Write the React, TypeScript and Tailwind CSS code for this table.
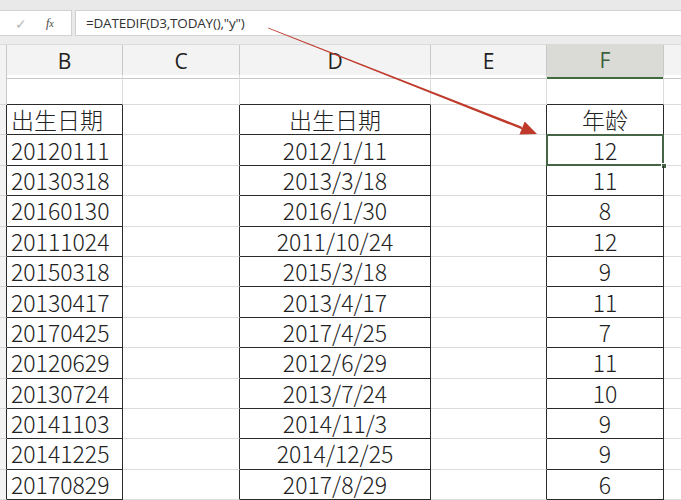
// Excel 截图：DATEDIF 计算年龄
const COLS = ["B", "C", "D", "E", "F"];

const rows: [string, string, string][] = [
  ["20120111", "2012/1/11", "12"],
  ["20130318", "2013/3/18", "11"],
  ["20160130", "2016/1/30", "8"],
  ["20111024", "2011/10/24", "12"],
  ["20150318", "2015/3/18", "9"],
  ["20130417", "2013/4/17", "11"],
  ["20170425", "2017/4/25", "7"],
  ["20120629", "2012/6/29", "11"],
  ["20130724", "2013/7/24", "10"],
  ["20141103", "2014/11/3", "9"],
  ["20141225", "2014/12/25", "9"],
  ["20170829", "2017/8/29", "6"],
];

const grid = "grid grid-cols-[7px_116px_117px_191px_116px_117px_1fr]";
const cellFont = "font-['Noto_Sans_CJK_SC','Noto_Sans',sans-serif] font-light text-[23px] text-[#222]";

function EmptyRow() {
  // 第 2 行：空行，下边框是表格上沿
  return (
    <div className={`${grid} h-[30px]`}>
      <div className="border-r border-b border-r-[#c8c8c8] border-b-[#d6d6d6] bg-[#f3f3f3]" />
      <div className="border-r border-b border-r-[#dcdcdc] border-b-[#2a2a2a]" />
      <div className="border-r border-b border-r-[#dcdcdc] border-b-[#dcdcdc]" />
      <div className="border-r border-b border-r-[#dcdcdc] border-b-[#2a2a2a]" />
      <div className="border-r border-b border-r-[#dcdcdc] border-b-[#dcdcdc]" />
      <div className="border-r border-b border-r-[#dcdcdc] border-b-[#2a2a2a]" />
      <div className="border-b border-b-[#dcdcdc]" />
    </div>
  );
}

function TableRow({ b, d, f, selected }: { b: string; d: string; f: string; selected?: boolean }) {
  return (
    <div className={`${grid} h-[30.4px] ${cellFont}`}>
      <div className="border-r border-b border-r-[#2a2a2a] border-b-[#d6d6d6] bg-[#f3f3f3]" />
      <div className="flex items-center border-r border-b border-[#2a2a2a] pl-[4px] leading-none">{b}</div>
      <div className="border-r border-b border-r-[#2a2a2a] border-b-[#dcdcdc]" />
      <div className="flex items-center justify-center border-r border-b border-[#2a2a2a] leading-none">{d}</div>
      <div className="border-r border-b border-r-[#2a2a2a] border-b-[#dcdcdc]" />
      <div className="relative flex items-center justify-center border-r border-b border-[#2a2a2a] leading-none">
        {f}
        {selected && (
          <>
            <div className="absolute -top-[1px] -left-[1px] -right-[1px] -bottom-[1px] border-2 border-[#466446]" />
            <div className="absolute -right-[4px] -bottom-[4px] h-[6px] w-[6px] border border-white bg-[#466446]" />
          </>
        )}
      </div>
      <div className="border-b border-b-[#dcdcdc]" />
    </div>
  );
}

export default function App() {
  return (
    <div className="relative h-[500px] w-[681px] overflow-hidden bg-white">
      {/* 编辑栏 */}
      <div className="h-[10px] bg-[#e9e9e9]" />
      <div className="flex h-[26px] bg-[#e9e9e9]">
        <div className="flex w-[72px] items-center border-y border-r border-[#d2d2d2] bg-white">
          <span className="ml-[15px] text-[14px] text-[#b8b8b8]">✓</span>
          <span className="ml-[19px] font-['Liberation_Serif',serif] text-[12px] italic text-[#444]">
            f<span className="text-[10px]">x</span>
          </span>
        </div>
        <div className="ml-[3px] flex flex-1 items-center border-y border-l border-[#d2d2d2] bg-white pl-[10px] font-['Open_Sans',sans-serif] text-[13.5px] tracking-[-0.2px] text-[#333]">
          =DATEDIF(D3,TODAY(),"y")
        </div>
      </div>
      <div className="h-[9px] border-b border-[#dadada] bg-[#ececec]" />

      {/* 列标 */}
      <div className={`${grid} h-[30px] bg-[#f3f3f3] font-['Open_Sans',sans-serif] text-[21px] text-[#222]`}>
        <div className="border-r border-b border-[#c8c8c8]" />
        {COLS.map((c) =>
          c === "F" ? (
            <div key={c} className="flex items-center justify-center border-r border-b-2 border-r-[#c8c8c8] border-b-[#3f6b3f] bg-[#dadad6] text-[#3c5f3c]">
              {c}
            </div>
          ) : (
            <div key={c} className="flex items-center justify-center border-r border-b border-[#c8c8c8]">
              {c}
            </div>
          ),
        )}
        <div className="border-b border-[#c8c8c8]" />
      </div>

      <EmptyRow />
      <TableRow b="出生日期" d="出生日期" f="年龄" />
      {rows.map(([b, d, f], i) => (
        <TableRow key={b + i} b={b} d={d} f={f} selected={i === 0} />
      ))}

      {/* 红色箭头 */}
      <svg className="pointer-events-none absolute left-0 top-0" width="681" height="500">
        <polygon points="268,27.6 268.4,28.5 523,129.8 521.4,126.4" fill="#bf3a2b" />
        <polygon points="537,134 519.5,134.6 524.7,121.6" fill="#bf3a2b" />
      </svg>
    </div>
  );
}
